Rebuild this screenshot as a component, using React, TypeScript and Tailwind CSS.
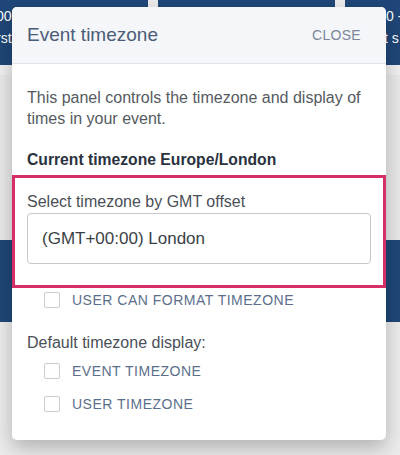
import React from "react";

function Check({ label }: { label: string }) {
  return (
    <div className="flex items-center h-[16px]">
      <span className="w-[16px] h-[16px] border border-[#c9cdd3] rounded-[2px] bg-white shrink-0" />
      <span className="ml-[12px] text-[14px] tracking-[0.5px] text-[#5b6f8d] leading-none">{label}</span>
    </div>
  );
}

export default function App() {
  return (
    <div
      className="relative w-[400px] h-[455px] overflow-hidden bg-[#ececec]"
      style={{ fontFamily: '"Liberation Sans", Arial, sans-serif' }}
    >
      {/* background page */}
      <div className="flex gap-[10px] h-[65px]">
        <div className="w-[148px] bg-[#1f4778] text-white text-[14px] leading-[22px] relative">
          <div className="absolute left-[-4px] top-[5px] whitespace-nowrap">
            <div>00 - 10:00</div>
            <div>rst session</div>
          </div>
        </div>
        <div className="w-[177px] bg-[#1f4778]" />
        <div className="flex-1 bg-[#1f4778] text-white text-[14px] leading-[22px] relative overflow-hidden">
          <div className="absolute left-[41px] top-[5px] whitespace-nowrap">
            <div>0 -</div>
            <div className="ml-[-2px]">t s</div>
          </div>
        </div>
      </div>
      <div className="h-[10px] bg-[#f0f0f0]" />
      <div className="h-[165px] bg-[#e9e9e9]" />
      <div className="h-[82px] bg-[#1f4778]" />
      <div className="h-[133px] bg-[#ececec]" />

      {/* modal */}
      <div className="absolute left-[12px] top-[7px] w-[374px] h-[433px] bg-white rounded-[5px] shadow-[0_8px_20px_rgba(0,0,0,0.25)] overflow-hidden">
        <div className="h-[57px] bg-[#f4f6f9] border-b border-[#e1e4e9] flex items-center justify-between pl-[15px] pr-[25px]">
          <span className="text-[19px] text-[#4b5c78]">Event timezone</span>
          <span className="text-[14px] tracking-[0.3px] text-[#7a8699]">CLOSE</span>
        </div>
        <div className="pt-[23px]">
          <p className="px-[15px] text-[16px] leading-[21px] text-[#555a61]">
            This panel controls the timezone and display of times in your event.
          </p>
          <p className="px-[15px] mt-[21px] text-[15.7px] font-bold text-[#2a3240] leading-[20px]">
            Current timezone Europe/London
          </p>
          <div className="mt-[5px] border-[3px] border-[#d62f68] h-[113px] px-[12px] pt-[14px]">
            <div className="text-[16px] text-[#4a4f57] leading-[20px]">Select timezone by GMT offset</div>
            <div className="mt-[1px] h-[51px] border border-[#c4c7cc] rounded-[4px] flex items-center pl-[14px] text-[17px] text-[#3a3f46]">
              (GMT+00:00) London
            </div>
          </div>
          <div className="pl-[32px] mt-[4px]">
            <Check label="USER CAN FORMAT TIMEZONE" />
          </div>
          <div className="px-[15px] mt-[25px] text-[16px] text-[#4a4f57] leading-[20px]">Default timezone display:</div>
          <div className="pl-[32px] mt-[10px] flex flex-col gap-[17px]">
            <Check label="EVENT TIMEZONE" />
            <Check label="USER TIMEZONE" />
          </div>
        </div>
      </div>
    </div>
  );
}
